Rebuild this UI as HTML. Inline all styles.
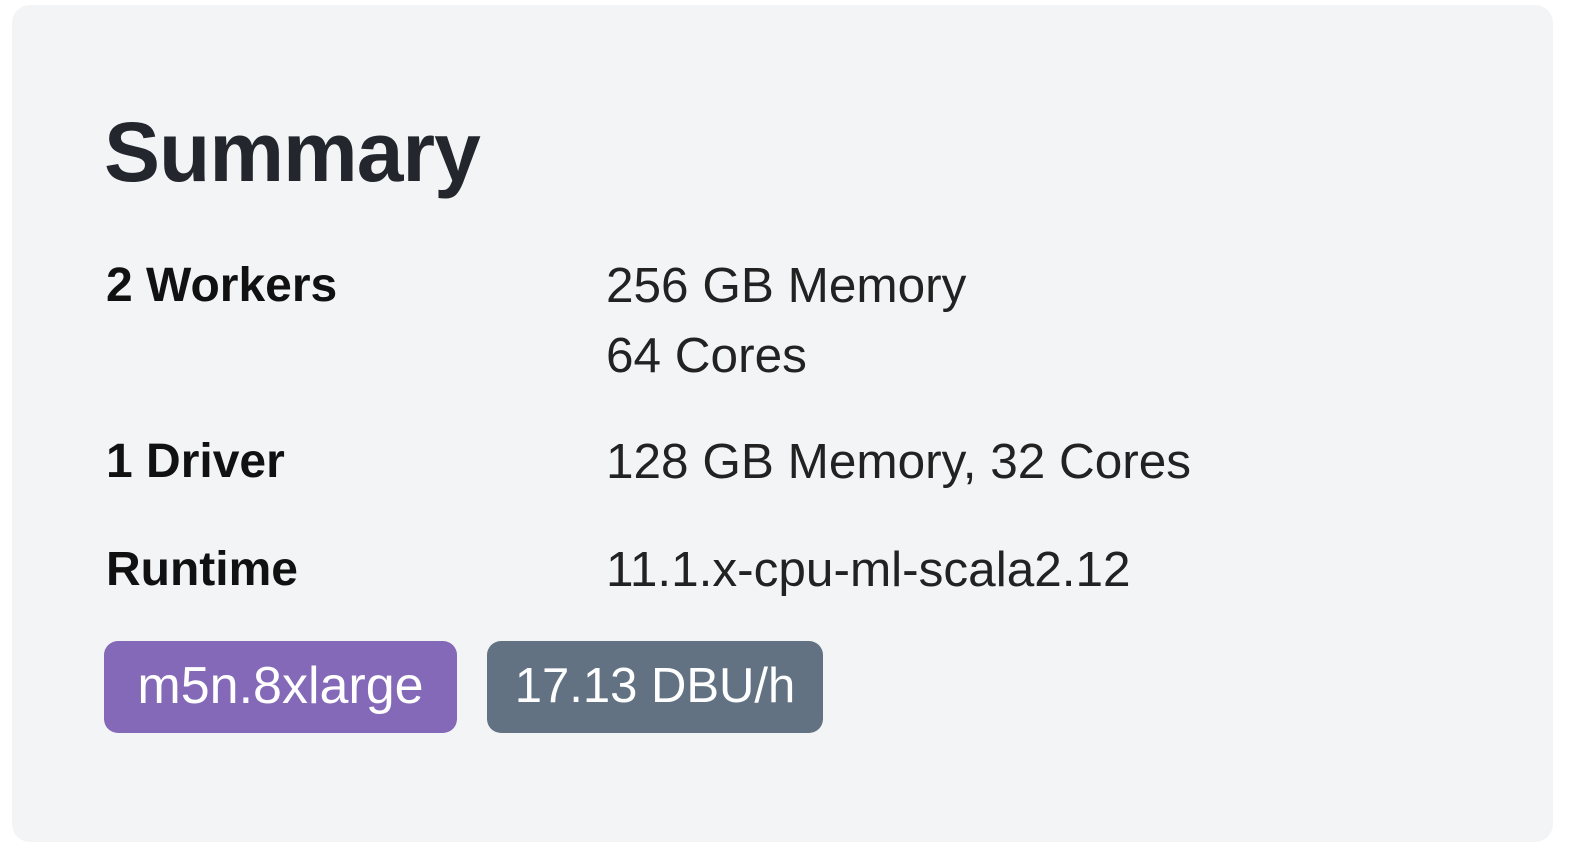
<!DOCTYPE html>
<html><head><style>
body{margin:0;width:1586px;height:860px;background:#fff;font-family:"Liberation Sans",sans-serif;position:relative;overflow:hidden}
.card{position:absolute;left:12px;top:5px;width:1541px;height:837px;background:#f3f4f6;border-radius:18px}
.t{position:absolute;white-space:nowrap;color:#1f2328}
h1{position:absolute;left:104px;top:104px;margin:0;font-size:84px;font-weight:bold;color:#23272d;letter-spacing:-1px}
.l{font-size:48px;font-weight:bold;color:#111}
.v{font-size:49.5px;color:#222}
.b{position:absolute;top:641px;height:92px;border-radius:14px;color:#fff;line-height:90px;text-align:center}
</style></head><body>
<div class="card"></div>
<h1>Summary</h1>
<div class="t l" style="left:106px;top:258px">2 Workers</div>
<div class="t v" style="left:606px;top:257px">256 GB Memory</div>
<div class="t v" style="left:606px;top:327px">64 Cores</div>
<div class="t l" style="left:106px;top:434px">1 Driver</div>
<div class="t v" style="left:606px;top:433px">128 GB Memory, 32 Cores</div>
<div class="t l" style="left:106px;top:542px">Runtime</div>
<div class="t v" style="left:606px;top:541px">11.1.x-cpu-ml-scala2.12</div>
<div class="b" style="left:104px;width:353px;background:#8469b8;font-size:52px">m5n.8xlarge</div>
<div class="b" style="left:487px;width:336px;background:#627282;font-size:49px">17.13 DBU/h</div>
</body></html>
